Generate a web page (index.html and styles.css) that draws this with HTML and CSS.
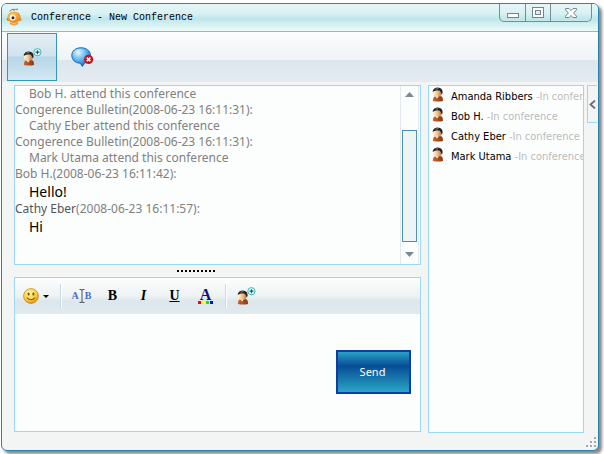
FILE: index.html
```html
<!DOCTYPE html>
<html lang="en">
<head>
  <meta charset="UTF-8">
  <meta name="viewport" content="width=device-width, initial-scale=1.0">
  <title>Conference - New Conference</title>
  <link rel="stylesheet" href="styles.css">
</head>
<body>
  <!-- shared icons -->
  <svg class="defs" width="0" height="0" aria-hidden="true">
    <defs>
      <linearGradient id="coat" x1="0" y1="0" x2="1" y2="0">
        <stop offset="0" stop-color="#cf6a30"/>
        <stop offset="1" stop-color="#8a3410"/>
      </linearGradient>
      <linearGradient id="skin" x1="0" y1="0" x2="1" y2="0">
        <stop offset="0" stop-color="#fff4d4"/>
        <stop offset="0.5" stop-color="#f4c48c"/>
        <stop offset="1" stop-color="#c07038"/>
      </linearGradient>
      <radialGradient id="balloon" cx="0.35" cy="0.25" r="0.8">
        <stop offset="0" stop-color="#e8f8ff"/>
        <stop offset="0.45" stop-color="#6cc0f4"/>
        <stop offset="1" stop-color="#0a66c8"/>
      </radialGradient>
      <radialGradient id="face" cx="0.4" cy="0.3" r="0.75">
        <stop offset="0" stop-color="#fff6a0"/>
        <stop offset="0.6" stop-color="#fcd040"/>
        <stop offset="1" stop-color="#d88a10"/>
      </radialGradient>
      <radialGradient id="orange" cx="0.4" cy="0.3" r="0.8">
        <stop offset="0" stop-color="#ffc850"/>
        <stop offset="1" stop-color="#ee7a08"/>
      </radialGradient>
    </defs>
    <symbol id="person" viewBox="0 0 12 15">
      <path d="M0.8 14 L1.2 11 Q2 9 5 9 L8 9 Q10.4 9.2 10.7 11 L11 14 Q6 15.2 0.8 14 Z" fill="url(#coat)"/>
      <path d="M3.2 9 L5.2 11.6 L6.6 9.2 Z" fill="#fff"/>
      <path d="M1 5 Q5 3 9.5 4.5 L9.6 7 Q9 9.6 5.6 9.6 Q1.6 9.6 1 7 Z" fill="url(#skin)"/>
      <path d="M0.6 4.4 Q1.6 0.5 5.8 0.4 Q11 0.6 10.6 6 L9.6 7.4 Q9.2 5 7.6 3.8 Q4 3 1 4.8 Z" fill="#24221f"/>
      <path d="M2.8 2.2 Q4.6 0.8 6.8 1.4 L5.2 2.4 Z" fill="#8b877f"/>
    </symbol>
    <symbol id="person-add" viewBox="0 0 19 18">
      <use href="#person" x="0" y="3" width="12" height="15"/>
      <circle cx="14.4" cy="4.2" r="3.6" fill="#e9fffb" stroke="#38b8ac"/>
      <path d="M14.5 2.2 V6.2 M12.5 4.2 H16.5" stroke="#1c4c98" stroke-width="1.2"/>
    </symbol>
  </svg>

  <div class="window">
    <header class="titlebar">
      <svg class="logo" viewBox="0 0 16 18" width="16" height="18" aria-hidden="true">
        <path d="M3.5 3.4 Q6 0.6 8.4 1.4 M7.5 2.6 Q9.5 0.8 12 1.2" fill="none" stroke="#777" stroke-width="1"/>
        <path d="M3 12 L0.8 11 M13 12 L15.2 11" stroke="#ee7a08" stroke-width="2.4"/>
        <ellipse cx="8" cy="9.2" rx="6.6" ry="5.8" fill="url(#orange)"/>
        <circle cx="6.6" cy="9.4" r="3" fill="#fff"/>
        <circle cx="7" cy="9.8" r="1.5" fill="#3a2412"/>
        <path d="M4 15 Q8 18 12 15" fill="none" stroke="#f0a040" stroke-width="2"/>
      </svg>
      <h1 class="title">Conference - New Conference</h1>
      <div class="win-buttons">
        <button type="button" class="win-btn" aria-label="Minimize">
          <svg viewBox="0 0 14 12" width="14" height="12"><rect x="1.5" y="6.5" width="11" height="4" fill="#fff" stroke="#75838c"/></svg>
        </button>
        <button type="button" class="win-btn" aria-label="Maximize">
          <svg viewBox="0 0 14 12" width="14" height="12"><rect x="1.5" y="0.5" width="11" height="10" fill="#fff" stroke="#75838c"/><rect x="4.5" y="3.5" width="5" height="4" fill="#d8f0f4" stroke="#75838c"/></svg>
        </button>
        <button type="button" class="win-btn win-close" aria-label="Close">
          <svg viewBox="0 0 14 12" width="14" height="12"><path d="M1.5 1.5 H5 L7 3.6 L9 1.5 H12.5 V2.8 L9.6 6 L12.5 9.2 V10.5 H9 L7 8.4 L5 10.5 H1.5 V9.2 L4.4 6 L1.5 2.8 Z" fill="#fff" stroke="#75838c"/></svg>
        </button>
      </div>
    </header>

    <nav class="toolbar">
      <button type="button" class="tool active" aria-label="Invite">
        <svg width="19" height="18"><use href="#person-add"/></svg>
      </button>
      <button type="button" class="tool" aria-label="Leave conference">
        <svg viewBox="0 0 23 21" width="23" height="21">
          <path d="M10 0.8 C15.5 0.8 19.4 4 19.4 8.4 C19.4 12.6 17 15 13.6 16 L11.4 19.4 L9.2 16.2 C4 16 0.8 12.6 0.8 8.4 C0.8 4 4.5 0.8 10 0.8 Z" fill="url(#balloon)" stroke="#1c64b0"/>
          <circle cx="17.6" cy="12.4" r="4.6" fill="#cc1020"/>
          <path d="M15.8 10.6 L19.4 14.2 M19.4 10.6 L15.8 14.2" stroke="#fff" stroke-width="1.6"/>
        </svg>
      </button>
    </nav>

    <main class="main">
      <div class="left">
        <section class="chat">
          <div class="log">
            <p class="indent">Bob H. attend this conference</p>
            <p>Congerence Bulletin(2008-06-23 16:11:31):</p>
            <p class="indent">Cathy Eber attend this conference</p>
            <p>Congerence Bulletin(2008-06-23 16:11:31):</p>
            <p class="indent">Mark Utama attend this conference</p>
            <p>Bob H.(2008-06-23 16:11:42):</p>
            <p class="indent said">Hello!</p>
            <p><span class="sender">Cathy Eber</span>(2008-06-23 16:11:57):</p>
            <p class="indent said">Hi</p>
          </div>
          <div class="scrollbar">
            <svg viewBox="0 0 9 5" width="9" height="5"><path d="M0 5 L4.5 0 L9 5 Z" fill="#7c8894"/></svg>
            <div class="thumb"></div>
            <svg viewBox="0 0 9 5" width="9" height="5"><path d="M0 0 H9 L4.5 5 Z" fill="#7c8894"/></svg>
          </div>
        </section>

        <div class="splitter"><span class="grip"></span></div>

        <section class="editor">
          <div class="format-bar">
            <button type="button" class="fmt emoji" aria-label="Emoticons">
              <svg viewBox="0 0 27 16" width="27" height="16">
                <circle cx="8" cy="8" r="7.4" fill="url(#face)" stroke="#c88a18" stroke-width="0.8"/>
                <ellipse cx="5.6" cy="6" rx="1" ry="1.6" fill="#6a4808"/>
                <ellipse cx="10.4" cy="6" rx="1" ry="1.6" fill="#6a4808"/>
                <path d="M3.8 9.6 Q8 14 12.2 9.6" fill="none" stroke="#8a5a08" stroke-width="1.1"/>
                <path d="M20 7 H26 L23 10 Z" fill="#000"/>
              </svg>
            </button>
            <span class="sep"></span>
            <button type="button" class="fmt" aria-label="Font">
              <span class="ab">A</span>
              <svg viewBox="0 0 6 14" width="6" height="14"><path d="M0.5 0.5 H2.5 L3 1.5 L3.5 0.5 H5.5 M3 1 V13 M0.5 13.5 H2.5 L3 12.5 L3.5 13.5 H5.5" fill="none" stroke="#555"/></svg>
              <span class="ab">B</span>
            </button>
            <button type="button" class="fmt bold" aria-label="Bold">B</button>
            <button type="button" class="fmt italic" aria-label="Italic">I</button>
            <button type="button" class="fmt underline" aria-label="Underline">U</button>
            <button type="button" class="fmt color" aria-label="Text color">
              <span>A</span>
              <svg viewBox="0 0 15 3" width="15" height="3"><path d="M0 0h3v3H0z" fill="#f00"/><path d="M4 0h3v3H4z" fill="#ff0"/><path d="M8 0h3v3H8z" fill="#0e0"/><path d="M12 0h3v3h-3z" fill="#00f"/></svg>
            </button>
            <span class="sep"></span>
            <button type="button" class="fmt" aria-label="Add contact">
              <svg width="19" height="18"><use href="#person-add"/></svg>
            </button>
          </div>
          <div class="compose">
            <textarea class="message" aria-label="Message"></textarea>
            <button type="button" class="send">Send</button>
          </div>
        </section>
      </div>

      <ul class="members">
        <li><svg width="12" height="15"><use href="#person"/></svg><span>Amanda Ribbers <i>-In conference</i></span></li>
        <li><svg width="12" height="15"><use href="#person"/></svg><span>Bob H. <i>-In conference</i></span></li>
        <li><svg width="12" height="15"><use href="#person"/></svg><span>Cathy Eber <i>-In conference</i></span></li>
        <li><svg width="12" height="15"><use href="#person"/></svg><span>Mark Utama <i>-In conference</i></span></li>
      </ul>

      <button type="button" class="collapse" aria-label="Collapse">
        <svg viewBox="0 0 7 9" width="7" height="9"><path d="M6 0.5 L1.5 4.5 L6 8.5" fill="none" stroke="#667078" stroke-width="1.8"/></svg>
      </button>
    </main>

    <footer class="statusbar">
      <svg viewBox="0 0 11 11" width="11" height="11" aria-hidden="true"><path d="M9 1h2v2H9zM5 5h2v2H5zM9 5h2v2H9zM1 9h2v2H1zM5 9h2v2H5zM9 9h2v2H9z" fill="#a4a9ae"/></svg>
    </footer>
  </div>
</body>
</html>
```
FILE: styles.css
```css
*{
  box-sizing: border-box;
  margin: 0;
  padding: 0;
}
body{
  display: flex;
  min-height: 100vh;
  padding: 3px 5px 3px 1px;
  background: #fff;
  font: 12px/16px "Noto Sans", "DejaVu Sans Condensed", sans-serif;
}
button{
  border: 0;
  background: none;
  color: inherit;
  font: inherit;
}
li{
  list-style: none;
}
svg{
  display: block;
  flex: none;
}
.defs{
  position: absolute;
}

.window{
  flex: 1;
  min-width: 0;
  display: flex;
  flex-direction: column;
  border: 1px solid #2583b5;
  border-radius: 6px;
  background: #f3f5f5;
  box-shadow: 3px 3px 3px #888;
}

/* title bar */
.titlebar{
  display: flex;
  align-items: flex-start;
  height: 28px;
  padding: 0 6px 0 4px;
  border-bottom: 1px solid #a3b1b8;
  border-radius: 5px 5px 0 0;
  background: linear-gradient(#e6f6f7 0, #d8f1f3 35%, #bfe6ea 55%, #def4f5 85%, #eefafa 100%);
}
.logo{
  margin-top: 4px;
}
.title{
  flex: 1;
  padding-left: 9px;
  font: 10px/27px "Liberation Mono", monospace;
  color: #000;
}
.win-buttons{
  display: flex;
  height: 18px;
  border: 1px solid #7b8b92;
  border-top: 0;
  border-radius: 0 0 5px 5px;
}
.win-btn{
  display: flex;
  align-items: center;
  justify-content: center;
  width: 25px;
}
.win-btn + .win-btn{
  border-left: 1px solid #7b8b92;
}
.win-btn + .win-close{
  width: 41px;
}

/* main toolbar */
.toolbar{
  display: flex;
  height: 50px;
  padding: 1px 4px 0 5px;
  background: linear-gradient(#fcfefe 0, #eff3f6 55%, #dce6ed 56%, #e4ebf1 100%);
}
.tool{
  display: flex;
  align-items: center;
  justify-content: center;
  width: 50px;
  height: 48px;
}
.tool.active{
  border: 1px solid #3594c0;
  background: linear-gradient(#e3eef4 0, #d0e3ee 48%, #b5d5e7 50%, #d5e9f2 100%);
}

/* panels */
.main{
  flex: 1;
  display: flex;
  padding: 3px 1px 0 12px;
}
.left{
  flex: 1;
  min-width: 0;
  display: flex;
  flex-direction: column;
  padding-bottom: 1px;
}
.chat{
  flex: 1;
  display: flex;
  border: 1px solid #9bd8f7;
  background: #fcfefe;
}
.log{
  flex: 1;
  color: #808080;
}
.log .indent{
  padding-left: 14px;
}
.log .said{
  font-size: 14px;
  line-height: 19px;
  color: #000;
}
.sender{
  color: #555;
}
.scrollbar{
  display: flex;
  flex-direction: column;
  align-items: center;
  width: 19px;
  margin-right: 1px;
  padding: 6px 0 7px;
  border-left: 1px solid #e2e9f1;
  border-right: 1px solid #e2e9f1;
}
.thumb{
  flex: 1;
  width: 15px;
  margin: 33px 0 10px;
  border: 1px solid #4a90ba;
  background: #eef3f5;
}
.splitter{
  display: flex;
  align-items: center;
  justify-content: center;
  height: 12px;
  padding-right: 44px;
}
.grip{
  width: 38px;
  height: 2px;
  background: repeating-linear-gradient(90deg, #000 0, #000 2px, transparent 2px, transparent 4px);
}
.editor{
  display: flex;
  flex-direction: column;
  height: 155px;
  border: 1px solid #9bd8f7;
  background: #fcfefe;
}
.format-bar{
  display: flex;
  align-items: center;
  height: 36px;
  padding-left: 1px;
  background: linear-gradient(#fcfefe 0, #eef2f4 50%, #dce6eb 65%, #e0eaef 100%);
}
.fmt{
  display: flex;
  align-items: center;
  justify-content: center;
  width: 31px;
  height: 24px;
  font: bold 14px/16px "Liberation Serif", serif;
}
.emoji{
  width: 40px;
}
.sep{
  width: 2px;
  height: 24px;
  margin: 0 4px;
  border-left: 1px solid #c9dae2;
  border-right: 1px solid #fff;
}
.ab{
  font-size: 10px;
  color: #4a68cc;
}
.italic{
  font-style: italic;
}
.underline{
  text-decoration: underline;
}
.color{
  flex-direction: column;
  font-size: 16px;
  line-height: 13px;
  color: #10107c;
}
.compose{
  flex: 1;
  display: flex;
  align-items: center;
  padding: 0 9px 2px 0;
}
.message{
  flex: 1;
  align-self: stretch;
  min-width: 0;
  border: 0;
  outline: 0;
  background: none;
  resize: none;
  font: inherit;
}
.send{
  width: 75px;
  height: 44px;
  padding-right: 2px;
  border: 2px solid #0a3cab;
  background: linear-gradient(#2ba0c4 0, #084c96 35%, #1470a8 60%, #2aa5c5 100%);
  color: #fff;
  font-size: 11px;
}

/* member list */
.members{
  width: 156px;
  margin: 0 3px 0 7px;
  padding: 1px 0 0 3px;
  border: 1px solid #9bd8f7;
  background: #fcfefe;
  overflow: hidden;
}
.members li{
  display: flex;
  height: 20px;
  color: #000;
  font: 11px/20px "DejaVu Sans Condensed", sans-serif;
  white-space: nowrap;
}
.members span{
  flex: 1;
  min-width: 0;
  margin-left: 7px;
  overflow: hidden;
}
.members i{
  font-style: normal;
  color: #bbb;
}
.collapse{
  display: flex;
  align-items: center;
  justify-content: center;
  width: 10px;
  height: 38px;
  border: 1px solid #9bd8f7;
  border-right: 0;
}

.statusbar{
  display: flex;
  justify-content: flex-end;
  align-items: flex-end;
  height: 17px;
  padding: 0 2px 3px 0;
}
```
